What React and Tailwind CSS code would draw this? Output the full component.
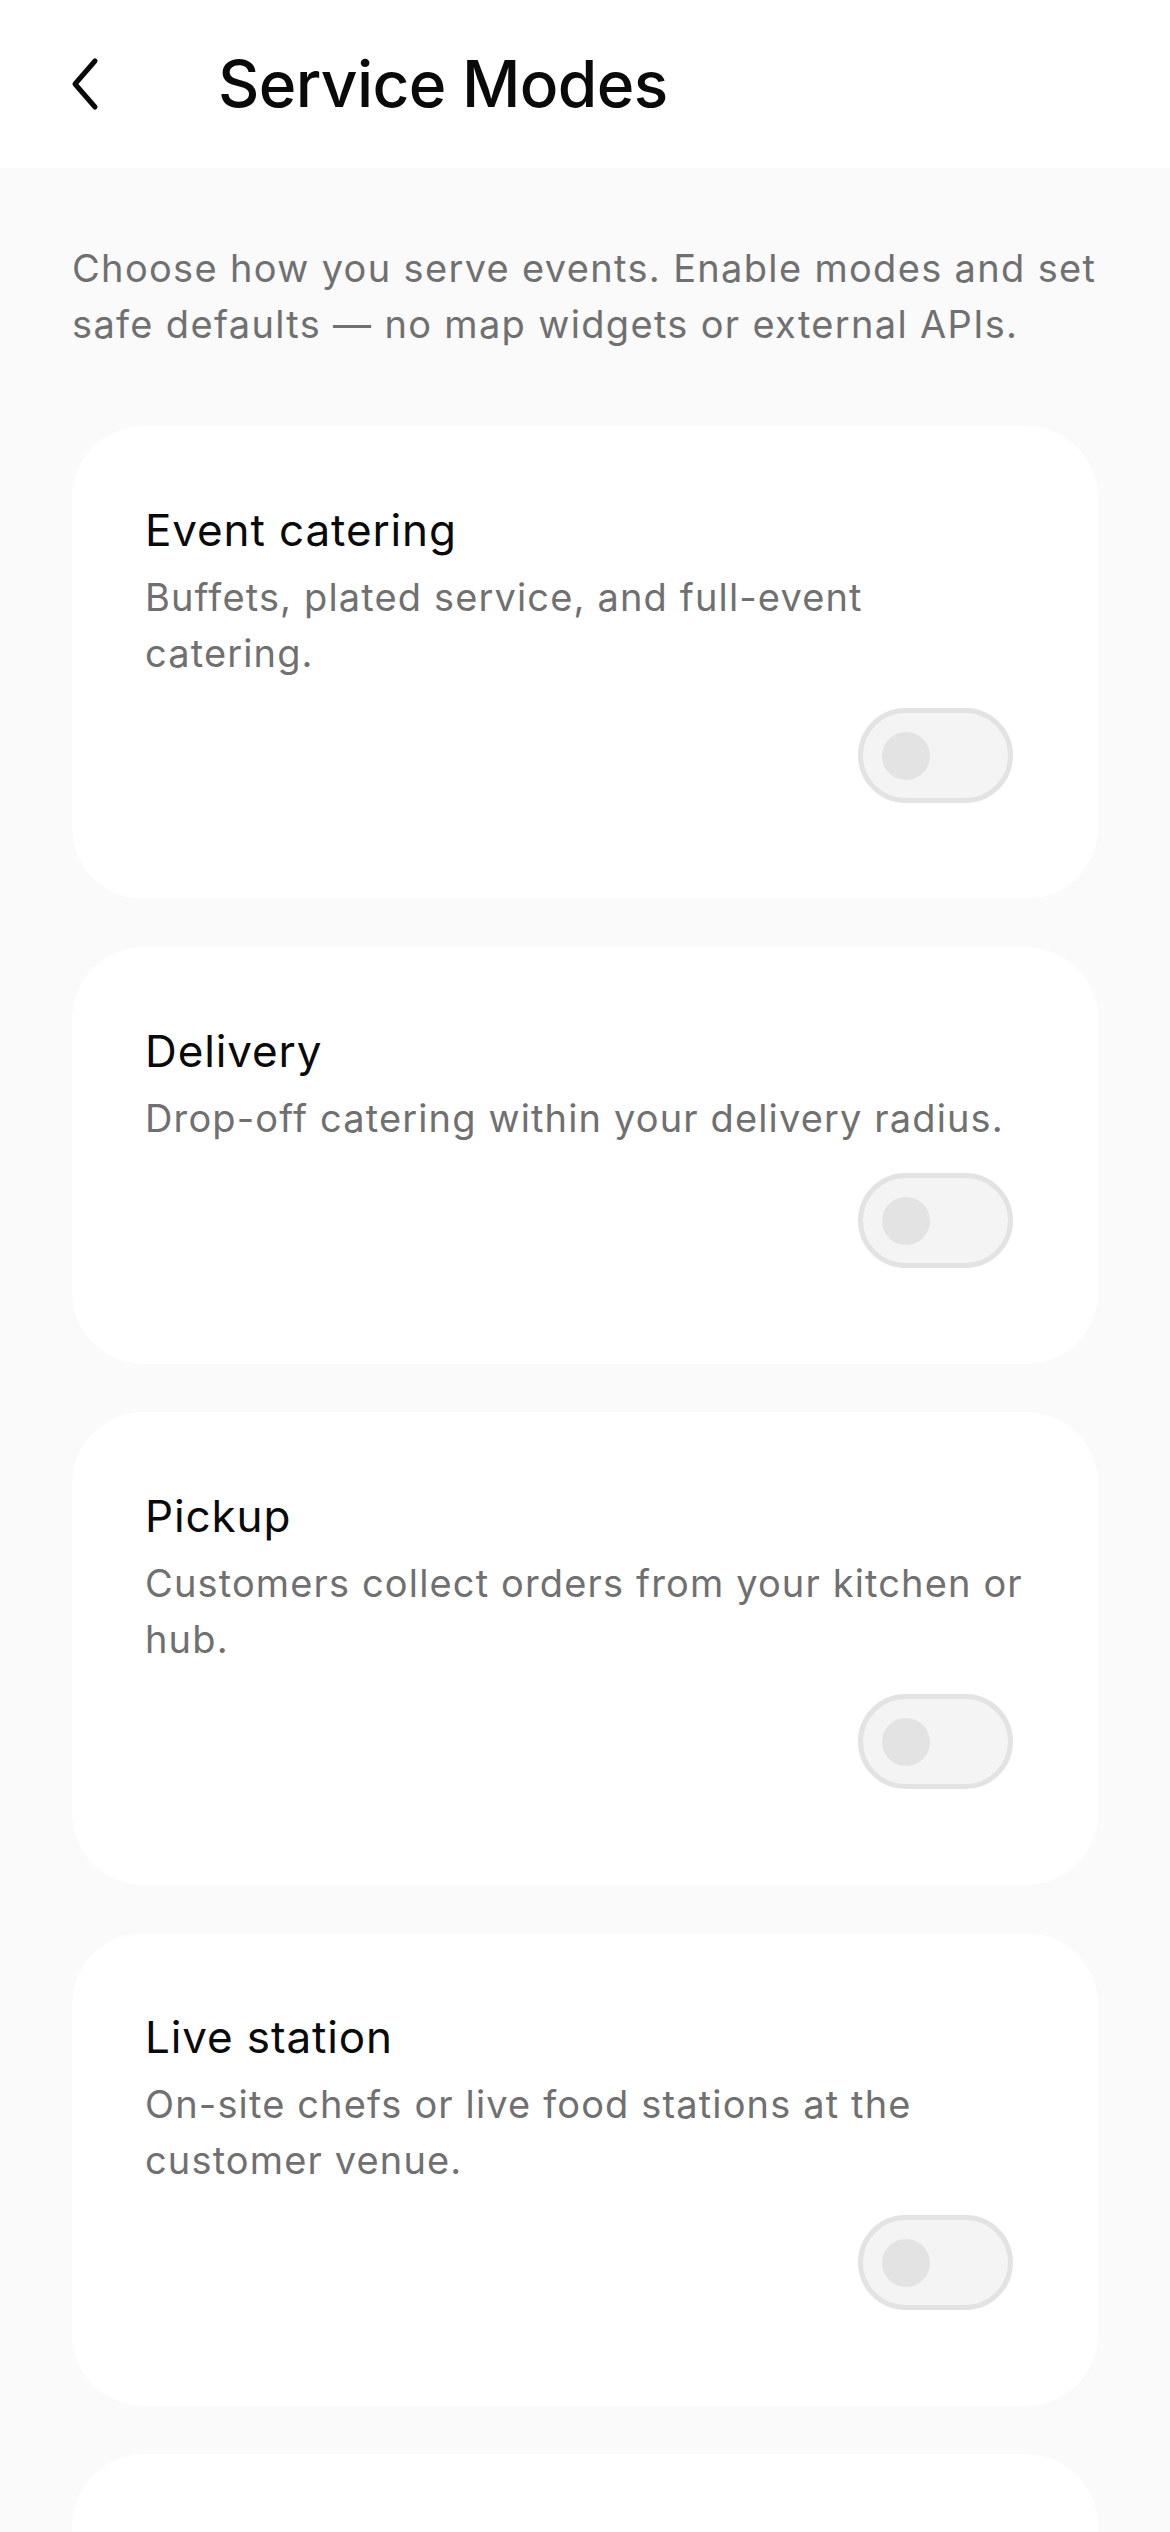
import { useState } from 'react';

const modes = [
  { id: 'event', title: 'Event catering', desc: 'Buffets, plated service, and full-event catering.' },
  { id: 'delivery', title: 'Delivery', desc: 'Drop-off catering within your delivery radius.' },
  { id: 'pickup', title: 'Pickup', desc: 'Customers collect orders from your kitchen or hub.' },
  { id: 'live', title: 'Live station', desc: 'On-site chefs or live food stations at the customer venue.' },
  { id: 'boxed', title: 'Boxed meals', desc: 'Individually packed meals for offices and groups.' },
];

const Toggle = ({ on, onChange }) => (
  <button
    onClick={onChange}
    className={`relative w-[155px] h-[95px] rounded-full border-[5px] ${on ? 'bg-[#111111] border-[#111111]' : 'bg-[#f4f4f4] border-[#e3e3e3]'}`}
  >
    <span
      className={`absolute top-1/2 -translate-y-1/2 w-[48px] h-[48px] rounded-full ${on ? 'left-[74px] bg-white' : 'left-[19px] bg-[#e3e3e3]'}`}
    />
  </button>
);

const ModeCard = ({ title, desc, on, onToggle }) => (
  <div className="bg-white rounded-[72px] pl-[73px] pr-[66px] pt-[76px] pb-[96px]">
    <h2 className="text-[44px] leading-[56px] text-[#0a0a0a] tracking-[0.02em]">{title}</h2>
    <p className="mt-[11px] text-[38px] leading-[56px] text-[#707070] tracking-[0.03em]">{desc}</p>
    <div className="flex justify-end mt-[27px] mr-[19px]">
      <Toggle on={on} onChange={onToggle} />
    </div>
  </div>
);

export default function App() {
  const [enabled, setEnabled] = useState({});

  return (
    <div className="min-h-screen bg-[#fafafa]" style={{ fontFamily: 'Inter, "Noto Sans", sans-serif' }}>
      {/* Header */}
      <header className="h-[168px] bg-white flex items-center">
        <button className="ml-[66px] w-[36px] h-[56px] flex items-center justify-center">
          <svg width="32" height="54" viewBox="0 0 32 54" fill="none">
            <path d="M27 4 L7 27 L27 50" stroke="#0a0a0a" strokeWidth="5" strokeLinecap="round" strokeLinejoin="round" />
          </svg>
        </button>
        <h1 className="ml-[116px] mt-[-1px] text-[64px] leading-none font-medium tracking-[-0.01em] text-[#0a0a0a]">Service Modes</h1>
      </header>

      <main className="px-[72px] pt-[72px] pb-[72px]">
        <p className="text-[38px] leading-[56px] text-[#707070] tracking-[0.035em]">
          Choose how you serve events. Enable modes and set safe defaults — no map widgets or external APIs.
        </p>

        <div className="mt-[74px] flex flex-col gap-[48px]">
          {modes.map((m) => (
            <ModeCard
              key={m.id}
              title={m.title}
              desc={m.desc}
              on={!!enabled[m.id]}
              onToggle={() => setEnabled((s) => ({ ...s, [m.id]: !s[m.id] }))}
            />
          ))}
        </div>
      </main>
    </div>
  );
}
